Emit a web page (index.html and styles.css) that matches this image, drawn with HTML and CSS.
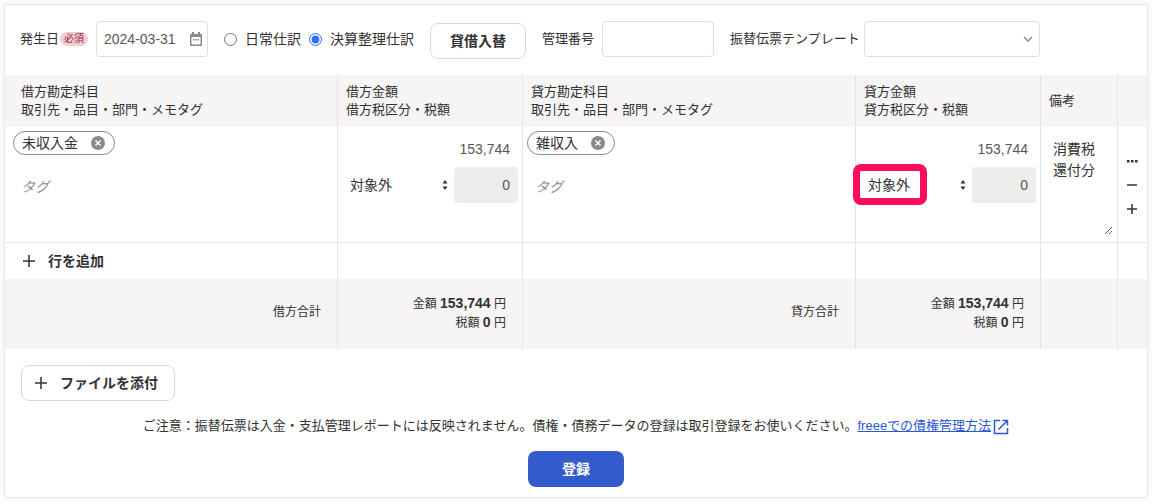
FILE: index.html
```html
<!DOCTYPE html>
<html lang="ja">
<head>
<meta charset="utf-8">
<meta name="viewport" content="width=device-width, initial-scale=1">
<title>振替伝票</title>
<link rel="stylesheet" href="styles.css">
</head>
<body>
<form class="slip">
  <div class="toolbar">
    <div class="field">
      <label for="issue-date">発生日</label><span class="badge">必須</span>
      <div class="date-box">
        <input id="issue-date" class="date-input" type="text" value="2024-03-31">
        <svg class="calendar" viewBox="0 0 14 16" aria-hidden="true"><path fill-rule="evenodd" d="M3 1h2v2h4V1h2v2h1a1 1 0 0 1 1 1v10a1 1 0 0 1-1 1H2a1 1 0 0 1-1-1V4a1 1 0 0 1 1-1h1zM2.500 6v7.500h9V6zM4 8h1.500v1.500H4zm2.250 0h1.500v1.500h-1.500zm2.250 0H10v1.500H8.500z"/></svg>
      </div>
    </div>
    <div class="radios">
      <label class="radio"><input type="radio" name="kind">日常仕訳</label>
      <label class="radio"><input type="radio" name="kind" checked>決算整理仕訳</label>
    </div>
    <button type="button" class="btn swap">貸借入替</button>
    <div class="field number-field">
      <label for="number">管理番号</label>
      <input id="number" class="text-input" type="text">
    </div>
    <div class="field template-field">
      <label for="template">振替伝票テンプレート</label>
      <div class="select-box">
        <select id="template" class="template"><option></option></select>
        <svg class="chevron" viewBox="0 0 10 6" aria-hidden="true"><path d="M1 1 5 5 9 1"/></svg>
      </div>
    </div>
  </div>

  <table class="entries">
    <colgroup><col><col class="col-amount"><col><col class="col-amount"><col class="col-memo"><col class="col-actions"></colgroup>
    <thead>
      <tr>
        <th>借方勘定科目<br>取引先・品目・部門・メモタグ</th>
        <th>借方金額<br>借方税区分・税額</th>
        <th>貸方勘定科目<br>取引先・品目・部門・メモタグ</th>
        <th>貸方金額<br>貸方税区分・税額</th>
        <th>備考</th>
        <th></th>
      </tr>
    </thead>
    <tbody>
      <tr class="entry">
        <td>
          <span class="chip">未収入金<button type="button" class="chip-remove" aria-label="未収入金を削除"><svg viewBox="0 0 14 14"><circle cx="7" cy="7" r="7"/><path d="m4.500 4.500 5 5m0-5-5 5"/></svg></button></span>
          <input class="tag-input" type="text" placeholder="タグ" aria-label="借方タグ">
        </td>
        <td>
          <input class="amount" type="text" value="153,744" aria-label="借方金額">
          <div class="tax">
            <div class="tax-kind">
              <select aria-label="借方税区分"><option>対象外</option></select>
              <svg class="updown" viewBox="0 0 6 10" aria-hidden="true"><path d="M3 0 5.500 3.500h-5zM3 10 .5 6.500h5z"/></svg>
            </div>
            <input class="tax-amount" type="text" value="0" disabled aria-label="借方税額">
          </div>
        </td>
        <td>
          <span class="chip">雑収入<button type="button" class="chip-remove" aria-label="雑収入を削除"><svg viewBox="0 0 14 14"><circle cx="7" cy="7" r="7"/><path d="m4.500 4.500 5 5m0-5-5 5"/></svg></button></span>
          <input class="tag-input" type="text" placeholder="タグ" aria-label="貸方タグ">
        </td>
        <td>
          <input class="amount" type="text" value="153,744" aria-label="貸方金額">
          <div class="tax">
            <div class="tax-kind">
              <select aria-label="貸方税区分"><option>対象外</option></select>
              <svg class="updown" viewBox="0 0 6 10" aria-hidden="true"><path d="M3 0 5.500 3.500h-5zM3 10 .5 6.500h5z"/></svg>
              <span class="highlight"></span>
            </div>
            <input class="tax-amount" type="text" value="0" disabled aria-label="貸方税額">
          </div>
        </td>
        <td><textarea class="memo" aria-label="備考">消費税還付分</textarea></td>
        <td class="actions">
          <button type="button" class="icon-btn" aria-label="メニュー"><svg viewBox="0 0 12 12"><path class="solid" d="M1 5h2.500v2.500H1zm4 0h2.500v2.500H5zm4 0h2.500v2.500H9z"/></svg></button>
          <button type="button" class="icon-btn" aria-label="行を削除"><svg viewBox="0 0 12 12"><path d="M1 6h10"/></svg></button>
          <button type="button" class="icon-btn" aria-label="行を挿入"><svg viewBox="0 0 12 12"><path d="M1 6h10M6 1v10"/></svg></button>
        </td>
      </tr>
      <tr class="add">
        <td><button type="button" class="add-row"><svg class="plus" viewBox="0 0 16 16" aria-hidden="true"><path d="M2 8h12M8 2v12"/></svg>行を追加</button></td>
        <td></td><td></td><td></td><td></td><td></td>
      </tr>
    </tbody>
    <tfoot>
      <tr>
        <td class="total-label">借方合計</td>
        <td>金額 <b>153,744</b> 円<br>税額 <b>0</b> 円</td>
        <td class="total-label">貸方合計</td>
        <td>金額 <b>153,744</b> 円<br>税額 <b>0</b> 円</td>
        <td></td><td></td>
      </tr>
    </tfoot>
  </table>

  <div class="footer">
    <button type="button" class="btn attach"><svg class="plus" viewBox="0 0 16 16" aria-hidden="true"><path d="M2 8h12M8 2v12"/></svg>ファイルを添付</button>
    <p class="note">ご注意：振替伝票は入金・支払管理レポートには反映されません。債権・債務データの登録は取引登録をお使いください。<a href="#">freeeでの債権管理方法<svg class="external" viewBox="0 0 16 16" aria-hidden="true"><path d="M7 1.500H1.500v13h13V9M9.500 1.500h5v5M14 2 5.500 10.500"/></svg></a></p>
    <button type="submit" class="submit">登録</button>
  </div>
</form>
</body>
</html>
```
FILE: styles.css
```css
* {
  box-sizing: border-box;
}

body {
  margin: 0;
  padding: 4px;
  background: #fff;
  color: #323232;
  font: 13px/18px "Liberation Sans", "Noto Sans CJK JP", sans-serif;
}

input, select, textarea, button {
  margin: 0;
  color: #323232;
  font: 14px/20px "Liberation Sans", "Noto Sans CJK JP", sans-serif;
}

button {
  padding: 0;
  border: 0;
  background: none;
}

svg {
  display: block;
}

.slip {
  border: 1px solid #e9e7e7;
  background: #fff;
  box-shadow: 0 0 10px rgba(0, 0, 0, 0.07);
}

/* Toolbar */
.toolbar {
  display: flex;
  align-items: flex-start;
  min-height: 70px;
  padding: 16px 15px;
}

.field {
  display: flex;
  align-items: center;
  height: 36px;
  white-space: nowrap;
}

.badge {
  margin: 0 8px 0 1px;
  padding: 0 4px;
  border-radius: 7px;
  background: #f5cdd2;
  color: #8b2c3c;
  font-size: 10px;
  line-height: 14px;
}

.date-box, .select-box, .tax-kind {
  position: relative;
}

.date-input, .text-input, .template {
  display: block;
  width: 112px;
  height: 36px;
  padding: 0 7px;
  border: 1px solid #e1ded5;
  border-radius: 4px;
  background: #fff;
}

.date-input {
  color: #595757;
}

.calendar {
  position: absolute;
  top: 10px;
  right: 5px;
  width: 14px;
  height: 16px;
  fill: #8c8989;
}

.radios {
  display: flex;
  gap: 8px;
  height: 36px;
  margin-left: 16px;
}

.radio {
  display: flex;
  align-items: center;
  gap: 8px;
  font-size: 14px;
  white-space: nowrap;
}

.radio input {
  width: 13px;
  height: 13px;
  accent-color: #2c72ff;
}

.btn {
  height: 36px;
  border: 1px solid #dad8d8;
  border-radius: 8px;
  background: #fff;
  font-weight: bold;
}

.swap {
  align-self: flex-end;
  width: 96px;
  margin: 0 16px;
}

.number-field {
  gap: 8px;
}

.template-field {
  gap: 4px;
  margin-left: 16px;
}

.template {
  width: 176px;
  appearance: none;
}

.chevron {
  position: absolute;
  top: 15px;
  right: 7px;
  width: 10px;
  height: 6px;
  fill: none;
  stroke: #8c8989;
  stroke-width: 1.5;
}

/* Entries */
.entries {
  width: 100%;
  border-collapse: separate;
  border-spacing: 0;
  table-layout: fixed;
}

.col-amount {
  width: 185px;
}

.col-memo {
  width: 77px;
}

.col-actions {
  width: 29px;
}

th, td {
  border-right: 1px solid #e5e3e3;
}

th:last-child, td:last-child {
  border-right: 0;
}

th {
  height: 52px;
  padding: 8px;
  background: #f6f4f5;
  font-weight: normal;
  text-align: left;
}

th:first-child {
  padding-left: 16px;
}

.entry td {
  height: 116px;
  padding: 4px;
  border-bottom: 1px solid #e5e3e3;
  vertical-align: top;
}

.entry td:first-child {
  padding-left: 8px;
}

.chip {
  display: flex;
  align-items: center;
  gap: 13px;
  width: max-content;
  height: 24px;
  padding: 0 9px 0 8px;
  border: 1px solid #8c8989;
  border-radius: 12px;
  font-size: 14px;
}

.chip-remove, .chip-remove svg {
  width: 14px;
  height: 14px;
}

.chip-remove circle {
  fill: #8c8989;
}

.chip-remove path {
  stroke: #fff;
  stroke-width: 1.5;
}

.tag-input {
  display: block;
  width: 100%;
  height: 36px;
  margin-top: 14px;
  padding: 0 8px;
  border: 0;
  background: none;
}

.tag-input::placeholder {
  color: #8c8989;
  font-style: italic;
}

.amount, .tax-amount {
  display: block;
  height: 36px;
  padding: 0 8px;
  border: 0;
  color: #595757;
  text-align: right;
}

.amount {
  width: 100%;
  background: none;
}

.tax {
  display: flex;
}

.tax-kind {
  flex: 1;
}

.tax-kind select {
  width: 100%;
  height: 36px;
  padding: 0 8px;
  border: 0;
  background: none;
  appearance: none;
}

.updown {
  position: absolute;
  top: 13px;
  right: 6px;
  width: 6px;
  height: 10px;
  fill: #323232;
}

.highlight {
  position: absolute;
  top: -3px;
  left: -7px;
  width: 74px;
  height: 41px;
  border: 7px solid #ff0d5c;
  border-radius: 8px;
  pointer-events: none;
}

.tax-amount {
  width: 64px;
  border-radius: 4px;
  background: #efedec;
}

.memo {
  display: block;
  width: 100%;
  height: 104px;
  padding: 8px;
  border: 0;
  background: none;
  line-height: 21px;
  resize: both;
}

.entry .actions {
  padding: 0 2px;
  vertical-align: middle;
}

.icon-btn {
  display: flex;
  align-items: center;
  justify-content: center;
  width: 24px;
  height: 24px;
}

.icon-btn svg {
  width: 12px;
  height: 12px;
  stroke: #323232;
  stroke-width: 1.5;
}

.icon-btn .solid {
  fill: #323232;
  stroke: none;
}

.add td {
  height: 36px;
  padding: 0 16px;
}

.add-row, .attach {
  display: flex;
  align-items: center;
  gap: 11px;
  font-weight: bold;
}

.plus {
  width: 16px;
  height: 16px;
  stroke: #323232;
  stroke-width: 1.5;
}

tfoot td {
  padding: 16px;
  background: #f6f4f5;
  font-size: 12px;
  line-height: 19px;
  text-align: right;
}

tfoot b {
  font-size: 14px;
  line-height: 14px;
}

tfoot .total-label {
  padding-bottom: 20px;
}

/* Footer */
.footer {
  padding: 16px 16px 10px;
}

.attach {
  padding: 0 16px 0 11px;
}

.note {
  margin: 16px 0;
  text-align: center;
}

.note a {
  color: #2e58d1;
}

.external {
  display: inline-block;
  width: 16px;
  height: 16px;
  margin-left: 2px;
  vertical-align: -5px;
  fill: none;
  stroke: #2e58d1;
  stroke-width: 1.5;
}

.submit {
  display: block;
  width: 96px;
  height: 36px;
  margin: 0 auto;
  border-radius: 8px;
  background: #335bcd;
  color: #fff;
  font-weight: bold;
}
```
